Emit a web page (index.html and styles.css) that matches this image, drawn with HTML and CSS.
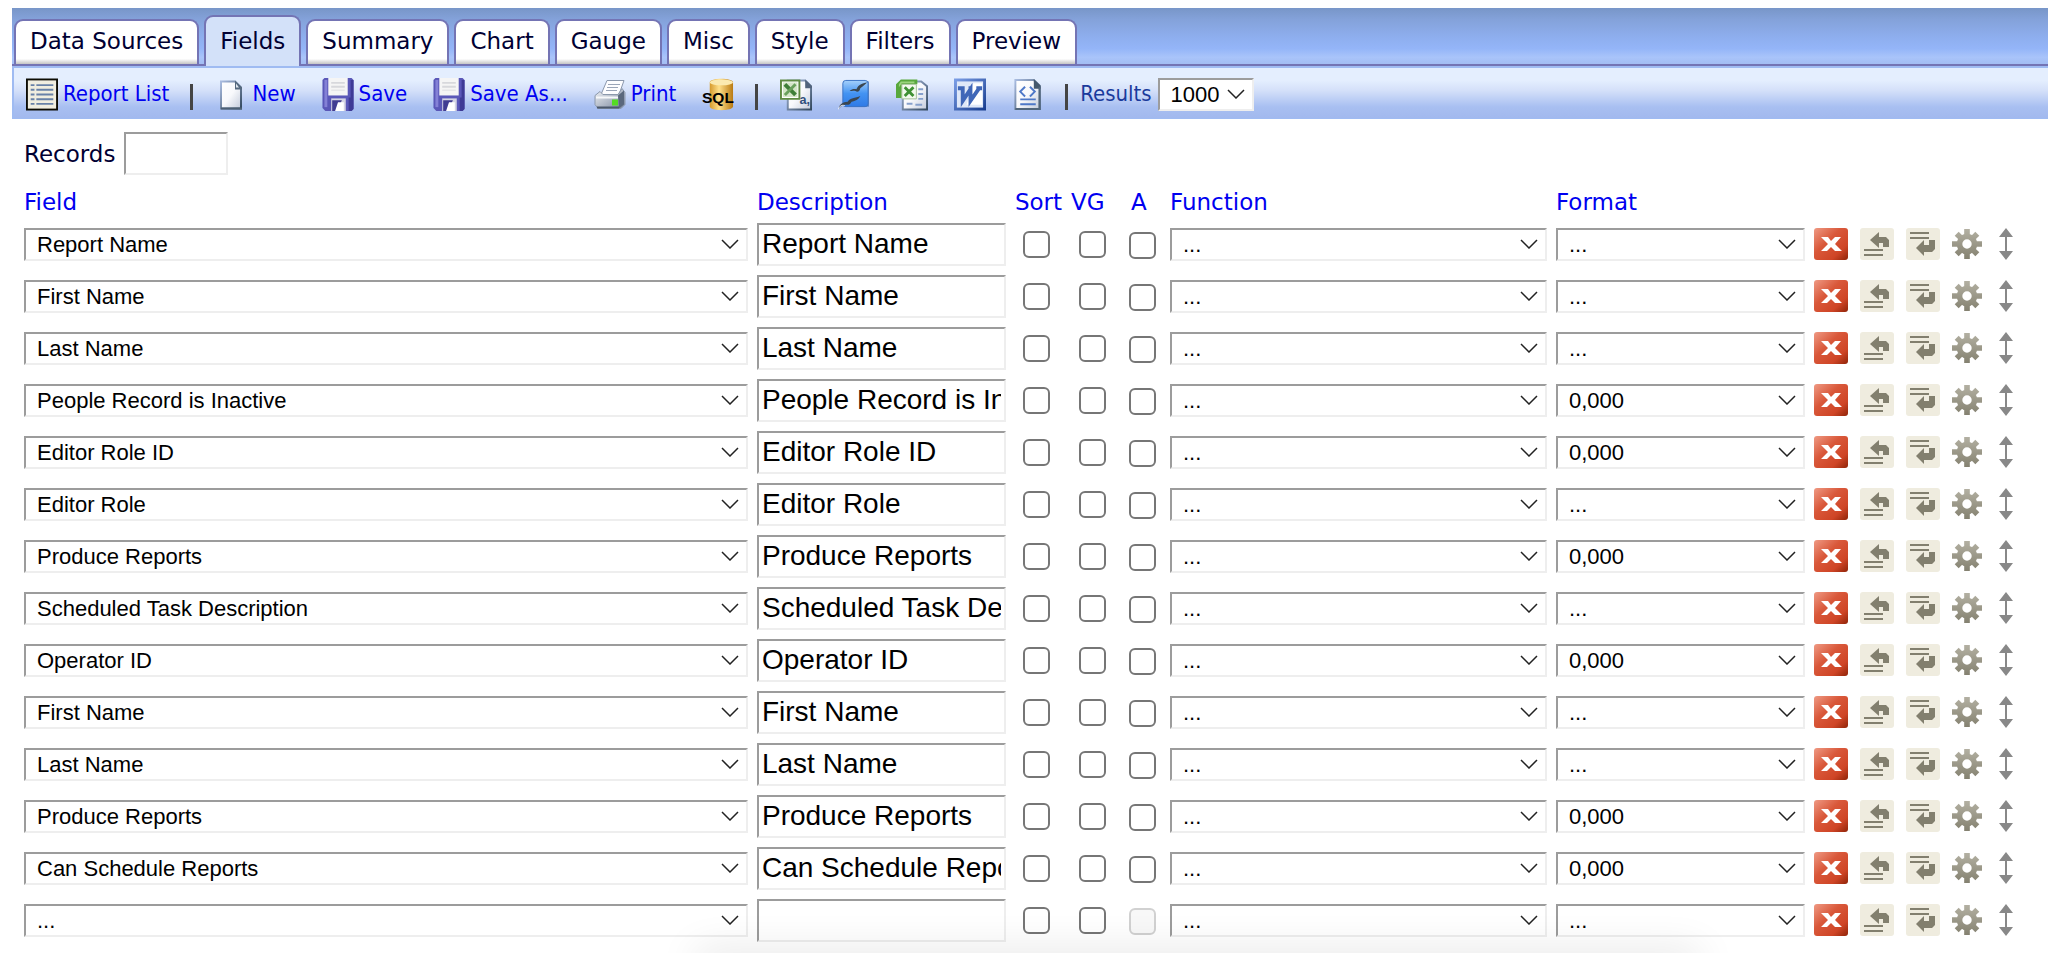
FILE: index.html
```html
<!DOCTYPE html>
<html lang="en">
<head>
  <meta charset="UTF-8">
  <meta name="viewport" content="width=device-width, initial-scale=1.0">
  <title>Report Designer - Fields</title>
  <link rel="stylesheet" href="styles.css">
</head>
<body>
  <!-- shared icons -->
  <svg class="sprite" width="0" height="0" aria-hidden="true">
    <defs>
      <linearGradient id="g-red" x1="0" y1="0" x2="1" y2="1">
        <stop offset="0" stop-color="#ef9a84"/><stop offset=".4" stop-color="#d9583a"/><stop offset=".75" stop-color="#cf4526"/><stop offset="1" stop-color="#8f2408"/>
      </linearGradient>
      <linearGradient id="g-gear" gradientUnits="userSpaceOnUse" x1="0" y1="0" x2="0" y2="32">
        <stop offset="0" stop-color="#b3b0a2"/><stop offset="1" stop-color="#848170"/>
      </linearGradient>
      <linearGradient id="g-page" x1="0" y1="0" x2="1" y2="1">
        <stop offset="0" stop-color="#ffffff"/><stop offset=".5" stop-color="#f8f9fc"/><stop offset="1" stop-color="#c3cbdb"/>
      </linearGradient>
      <linearGradient id="g-edge" x1="0" y1="0" x2="1" y2="1">
        <stop offset="0" stop-color="#a9bce0"/><stop offset="1" stop-color="#34495f"/>
      </linearGradient>
      <linearGradient id="g-gold" x1="0" y1="0" x2="1" y2="0">
        <stop offset="0" stop-color="#d69a2c"/><stop offset=".4" stop-color="#ffe08a"/><stop offset="1" stop-color="#b97a12"/>
      </linearGradient>
      <linearGradient id="g-blue" x1="0" y1="0" x2="0" y2="1">
        <stop offset="0" stop-color="#a5d0fb"/><stop offset=".5" stop-color="#4393f2"/><stop offset="1" stop-color="#2f7ae6"/>
      </linearGradient>
      <linearGradient id="g-metal" x1="0" y1="0" x2="1" y2="1">
        <stop offset="0" stop-color="#f4f6f9"/><stop offset="1" stop-color="#75839a"/>
      </linearGradient>
      <linearGradient id="g-word" x1="0" y1="0" x2="1" y2="1">
        <stop offset="0" stop-color="#7da0e8"/><stop offset="1" stop-color="#153a8c"/>
      </linearGradient>
    </defs>

    <symbol id="icon-save" viewBox="0 0 32 34">
      <path fill="#5a57b8" d="M2 0h28l2 2v30l-2 2H3l-3-3V2z"/>
      <path fill="#8481d6" d="M2 2h3v28H2z"/>
      <path fill="#3e3a96" d="M29 2h3v30l-2 2h-3V20h2z"/>
      <path fill="#f5f5f5" d="M6 0h20v18H6z"/>
      <path fill="#d7d8dc" d="M9 4h14v2H9zM9 8h14v2H9zM9 12h14v1H9z"/>
      <path fill="#d4d4e4" d="M9 21h15v13H9z"/>
      <path fill="#403c92" d="M10 23h10l-5 11h-5z"/>
      <path fill="#fff" d="M16 25h6v9h-9z"/>
    </symbol>

    <symbol id="icon-delete" viewBox="0 0 34 32">
      <rect width="34" height="32" rx="3" fill="url(#g-red)"/>
      <path fill="#fff" d="M7 9h7l3 4 4-4h6l-6 7 7 7h-7l-4-4-4 4H7l7-7z"/>
    </symbol>

    <symbol id="icon-insert-above" viewBox="0 0 34 32">
      <rect width="34" height="32" rx="3" fill="#efecdf"/>
      <path fill="#827f6e" d="M10 12l9-8v5h7l3 3v7h-6v-4h-4v5zM4 21h19v2H4zM4 26h19v2H4z"/>
    </symbol>

    <symbol id="icon-insert-below" viewBox="0 0 34 32">
      <rect width="34" height="32" rx="3" fill="#efecdf"/>
      <path fill="#827f6e" d="M10 20l8-8v5h5v-5h6v9l-3 3h-8v4zM4 4h19v2H4zM4 9h19v2H4z"/>
    </symbol>

    <symbol id="icon-gear" viewBox="0 0 32 32">
      <path stroke="url(#g-gear)" stroke-width="6" d="M16 0v8M16 24v8M0 16h8M24 16h8M5 5l5 5M22 22l5 5M27 5l-5 5M10 22l-5 5"/>
      <circle cx="16" cy="16" r="8" fill="#fff" stroke="url(#g-gear)" stroke-width="6"/>
    </symbol>

    <symbol id="icon-move" viewBox="0 0 16 32">
      <path fill="#888" d="M8 0l7 9H9v14h6l-7 9-7-9h6V9H1z"/>
    </symbol>
  </svg>

  <div class="designer">
    <nav class="tabs">
      <a class="tab" href="#data-sources">Data Sources</a>
      <a class="tab active" href="#fields">Fields</a>
      <a class="tab" href="#summary">Summary</a>
      <a class="tab" href="#chart">Chart</a>
      <a class="tab" href="#gauge">Gauge</a>
      <a class="tab" href="#misc">Misc</a>
      <a class="tab" href="#style">Style</a>
      <a class="tab" href="#filters">Filters</a>
      <a class="tab" href="#preview">Preview</a>
    </nav>

    <div class="toolbar">
      <a class="tool" href="#list">
        <svg class="icon" viewBox="0 0 34 34">
          <path fill="#0c0c04" d="M0 0h34v34H0z"/>
          <path fill="#f0eee0" d="M2 2h30v30H2z"/>
          <path stroke="#6882a8" stroke-width="2" d="M5 7h4M11 7h18M5 12h4M11 12h18M5 17h4M11 17h18M5 22h4M11 22h18M5 27h4M11 27h18"/>
        </svg>
        Report List
      </a>
      <span class="separator"></span>
      <a class="tool" href="#new">
        <svg class="icon" viewBox="0 0 32 32">
          <path fill="url(#g-page)" stroke="url(#g-edge)" stroke-width="2" d="M6 3h14l6 6v21H6z"/>
          <path fill="#55697e" d="M20 2l7 7v2h-7z"/>
          <path fill="#dfe7f0" d="M21 5l3 4h-3z"/>
          <path stroke="#4d6074" stroke-width="2" d="M6 30h21"/>
        </svg>
        New
      </a>
      <a class="tool" href="#save"><svg class="icon"><use href="#icon-save"/></svg>Save</a>
      <a class="tool" href="#save-as"><svg class="icon"><use href="#icon-save"/></svg>Save As...</a>
      <a class="tool" href="#print">
        <svg class="icon" viewBox="0 0 32 32">
          <path fill="#fdfdff" stroke="#8a97ac" d="M13 2h17l-5 14H7z"/>
          <path stroke="#9aa5b8" d="M14 6h12M13 9h11M12 12h11"/>
          <path fill="url(#g-metal)" stroke="#8c99ac" d="M6 13l3 3h15l4-6 3 4v12l-4 4H4l-3-4V17z"/>
          <path fill="#f7f8fa" d="M2 18h22v2H2z"/>
          <path fill="#5a687c" d="M24 17l6-5v14l-5 4z"/>
          <path fill="#4b586c" d="M3 28h22v2H3z"/>
          <path fill="#53dc22" d="M18 21h6v6h-6z"/>
        </svg>
        Print
      </a>
      <a class="tool" href="#sql">
        <svg class="icon" viewBox="0 0 33 33">
          <path fill="url(#g-gold)" d="M8 4c0-5 24-5 24 0v25c0 5-24 5-24 0z"/>
          <ellipse cx="20" cy="4" rx="12" ry="3" fill="#fbeab0"/>
          <text class="sql-text" x="0" y="25">SQL</text>
        </svg>
      </a>
      <span class="separator"></span>
      <a class="tool" href="#csv" aria-label="Export to CSV">
        <svg class="icon" viewBox="0 0 33 33">
          <path fill="url(#g-page)" stroke="url(#g-edge)" stroke-width="2" d="M8 2h18l6 6v24H8z"/>
          <path fill="#52647c" d="M26 1l7 7v2h-7z"/>
          <path fill="#fff" stroke="#5f8a42" stroke-width="2" d="M1 2h19v19H1z"/>
          <path fill="#d5e5c8" d="M3 4h15v15H3z"/>
          <path stroke="#3f7e38" stroke-width="4" d="M5 6l11 11"/>
          <path stroke="#6aa05c" stroke-width="3" d="M16 6L5 17"/>
          <text class="csv-text" x="20" y="26">a,</text>
        </svg>
      </a>
      <a class="tool" href="#odf" aria-label="Export to OpenOffice">
        <svg class="icon" viewBox="0 0 33 33">
          <path fill="#24579f" d="M7 3h25v26H7z" opacity=".6"/>
          <rect x="5" y="2" width="26" height="27" rx="3" fill="url(#g-blue)" stroke="#3a73c4"/>
          <path fill="#3b4650" d="M12 13c3-3 5-2 7-2 2-5 6-6 11-7-4 4-5 4-7 6-1 4-3 4-5 3-2-1-3 0-6 0zM1 31c0-4 4-7 9-7 2-4 8-4 13-6-2 4-5 5-9 6-2 4-4 3-6 3-3 0-4 1-7 4z"/>
          <path stroke="#eef2f7" fill="none" d="M0 32c2-4 4-5 7-4"/>
        </svg>
      </a>
      <a class="tool" href="#excel" aria-label="Export to Excel">
        <svg class="icon" viewBox="0 0 33 33">
          <path fill="url(#g-page)" stroke="url(#g-edge)" stroke-width="2" d="M7 3h19l6 5v24H7z"/>
          <path stroke="#86a0cc" stroke-width="2" d="M23 11h5M23 16h5M23 21h5M11 26h6M20 27h7"/>
          <path fill="#58a83c" d="M5 1h17v5H8v14H0V6z"/>
          <path fill="#9bd47e" d="M5 3h14v2H6L3 9V6z"/>
          <path fill="#f3faee" stroke="#a4bf98" d="M6 6h15v15H6z"/>
          <path stroke="#3f9034" stroke-width="3" d="M9 9l9 9M18 9l-9 9"/>
        </svg>
      </a>
      <a class="tool" href="#word" aria-label="Export to Word">
        <svg class="icon" viewBox="0 0 33 33">
          <path fill="url(#g-word)" d="M0 0h33v33H0z"/>
          <path fill="#dfe8f8" d="M3 3h27v27H3z"/>
          <path fill="#fff" d="M20 5h9v22H13z"/>
          <path fill="none" stroke="#4067b8" stroke-width="4" d="M4 10h7M15 10h4M23 10h6M9 10v13l8-12v12l9-13"/>
        </svg>
      </a>
      <a class="tool" href="#xml" aria-label="Export to XML">
        <svg class="icon" viewBox="0 0 32 34">
          <path fill="url(#g-page)" stroke="url(#g-edge)" stroke-width="2" d="M3 2h19l6 6v24H3z"/>
          <path fill="#44586c" d="M22 1l7 7v3h-7z"/>
          <path fill="none" stroke="#51667c" stroke-width="2" d="M28 9v23H3"/>
          <path fill="none" stroke="#4e78c8" stroke-width="2" d="M13 9l-5 5 5 5M18 9l5 5-5 5M8 22h16M8 27h16"/>
        </svg>
      </a>
      <span class="separator"></span>
      <div class="results">
        <label for="results">Results</label>
        <select class="select" id="results">
          <option>1000</option>
        </select>
      </div>
    </div>

    <main class="content">
      <div class="records">
        <label for="records">Records</label>
        <input class="input records-input" type="text" id="records">
      </div>

      <table class="fields">
        <colgroup>
          <col>
          <col class="col-description">
          <col class="col-check">
          <col class="col-check">
          <col class="col-a">
          <col class="col-function">
          <col class="col-format">
          <col class="col-action">
          <col class="col-action">
          <col class="col-action">
          <col class="col-action">
          <col class="col-move">
        </colgroup>
        <thead>
          <tr>
            <th><a href="#field">Field</a></th>
            <th><a href="#description">Description</a></th>
            <th><a href="#sort">Sort</a></th>
            <th><a href="#vg">VG</a></th>
            <th class="a-head"><a href="#a">A</a></th>
            <th><a href="#function">Function</a></th>
            <th><a href="#format">Format</a></th>
            <td colspan="5"></td>
          </tr>
        </thead>
        <tbody id="field-rows"></tbody>
      </table>
    </main>
  </div>

  <div class="bottom-shadow"></div>

  <script src="script.js"></script>
</body>
</html>
```

FILE: styles.css
```css
body {
  margin: 0;
  background-color: #fff;
  color: #000033;
  font-family: Verdana, 'DejaVu Sans', sans-serif;
  font-size: 23px;
  line-height: 28px;
}

a {
  color: #0000f0;
  text-decoration: none;
}

.sprite {
  position: absolute;
}

.designer {
  padding: 8px 0 0 12px;
}

/* tabs */
.tabs {
  display: flex;
  align-items: flex-end;
  gap: 5px;
  height: 58px;
  padding-left: 2px;
  box-sizing: border-box;
  background: linear-gradient(#7896c8, #84a2da 20%, #8eaeee 50%, #94b5f8 70%, #a9c4fa 85%, #a3bdf3 96%, #7474b4 96%);
}

.tab {
  padding: 6px 14px 9px;
  margin-bottom: 2px;
  border: 2px solid #7474b4;
  border-bottom: none;
  border-radius: 9px 9px 0 0;
  background: linear-gradient(#fff 88%, #c4c4c4);
  color: #000033;
}

.tab.active {
  padding: 10px 14px 11px;
  margin-bottom: 0;
  background: #d3e1f9;
}

/* toolbar */
.toolbar {
  display: flex;
  align-items: center;
  gap: 26px;
  height: 53px;
  padding: 2px 0 0 12px;
  box-sizing: border-box;
  border: 2px solid #9fbbf2;
  border-right: none;
  border-bottom-width: 1px;
  background: linear-gradient(#e4eefe 25%, #d4e0f9 45%, #a8bff1 78%, #a2b9ee);
  font-family: Tahoma, 'DejaVu Sans Condensed', 'DejaVu Sans', sans-serif;
  font-size: 22px;
}

.tool {
  display: flex;
  align-items: center;
  gap: 5px;
}

.icon {
  width: 32px;
  height: 33px;
}

.separator {
  width: 3px;
  height: 26px;
  margin: 6px -4px 0 -5px;
  background-color: #444;
}

.results {
  display: flex;
  align-items: center;
  gap: 6px;
  margin-left: -10px;
  color: #1a3a9c;
}

.sql-text {
  font: bold 16px 'Liberation Sans', sans-serif;
}

.csv-text {
  font: bold 13px 'Liberation Sans', sans-serif;
  fill: #33507c;
}

/* form controls */
.select,
.input {
  box-sizing: border-box;
  margin: 0;
  border: 2px solid;
  border-color: #9c9c9c #eee #eee #9c9c9c;
  border-radius: 0;
  background-color: #fff;
  color: #000;
  font-family: Arial, 'Liberation Sans', sans-serif;
}

.select {
  display: block;
  width: 100%;
  height: 33px;
  padding: 0 32px 0 11px;
  appearance: none;
  background-image: url("data:image/svg+xml,%3Csvg xmlns='http://www.w3.org/2000/svg' width='18' height='10'%3E%3Cpath d='M1 1l8 8 8-8' fill='none' stroke='%23222' stroke-width='1.500'/%3E%3C/svg%3E");
  background-repeat: no-repeat;
  background-position: right 7px center;
  font-size: 22px;
}

.input {
  display: block;
  width: 100%;
  height: 43px;
  padding: 0 3px;
  font-size: 28px;
}

.check {
  display: block;
  width: 27px;
  height: 27px;
  margin: 0 0 0 8px;
  box-sizing: border-box;
  appearance: none;
  border: 2px solid #767676;
  border-radius: 6px;
  background-color: #fff;
}

.check-a {
  margin: 2px 0 0 2px;
}

.check:disabled {
  border-color: #d1d1d1;
  background-color: #f8f8f8;
}

/* content */
.content {
  padding: 13px 34px 0 12px;
}

.records {
  display: flex;
  align-items: center;
  gap: 9px;
}

.records-input {
  width: 104px;
}

.fields {
  width: 100%;
  table-layout: fixed;
  border-collapse: collapse;
}

.fields th {
  height: 43px;
  padding: 0 0 2px;
  box-sizing: border-box;
  vertical-align: bottom;
  text-align: left;
  font-weight: normal;
  white-space: nowrap;
}

.fields tbody td {
  height: 52px;
  padding: 0 9px 0 0;
}

.fields .check-cell,
.fields .action-cell {
  padding: 0;
}

.fields .a-head {
  padding-left: 4px;
}

.col-description {
  width: 258px;
}

.col-check {
  width: 56px;
}

.col-a {
  width: 43px;
}

.col-function {
  width: 386px;
}

.col-format {
  width: 258px;
}

.col-action {
  width: 46px;
}

.col-move {
  width: 16px;
}

.action {
  display: block;
  padding: 0;
  border: none;
  background: none;
  cursor: pointer;
}

.action svg {
  display: block;
  width: 34px;
  height: 32px;
}

.action .gear {
  width: 30px;
}

.action .move {
  width: 16px;
}

/* soft edge of the panel below the window */
.bottom-shadow {
  position: fixed;
  right: 17%;
  bottom: -20px;
  left: 34%;
  height: 20px;
  box-shadow: 0 0 40px rgba(0, 0, 0, 0.14);
  pointer-events: none;
}
```

FILE: script.js
```javascript
const rows = [
  { field: 'Report Name', format: '...' },
  { field: 'First Name', format: '...' },
  { field: 'Last Name', format: '...' },
  { field: 'People Record is Inactive', format: '0,000' },
  { field: 'Editor Role ID', format: '0,000' },
  { field: 'Editor Role', format: '...' },
  { field: 'Produce Reports', format: '0,000' },
  { field: 'Scheduled Task Description', format: '...' },
  { field: 'Operator ID', format: '0,000' },
  { field: 'First Name', format: '...' },
  { field: 'Last Name', format: '...' },
  { field: 'Produce Reports', format: '0,000' },
  { field: 'Can Schedule Reports', format: '0,000' },
  { field: '', format: '...' }
];

const actions = [
  { icon: 'delete', label: 'Delete row' },
  { icon: 'insert-above', label: 'Insert row above' },
  { icon: 'insert-below', label: 'Insert row below' },
  { icon: 'gear', label: 'Advanced settings' },
  { icon: 'move', label: 'Move row' }
];

function selectCell(value, label) {
  return `<td><select class="select" aria-label="${label}"><option>${value}</option></select></td>`;
}

function checkCell(label, className = 'check', disabled = false) {
  return `<td class="check-cell"><input type="checkbox" class="${className}" aria-label="${label}" ${disabled ? 'disabled' : ''}></td>`;
}

function renderRows() {
  document.getElementById('field-rows').innerHTML = rows.map((row) => `
    <tr>
      ${selectCell(row.field || '...', 'Field')}
      <td><input class="input" type="text" aria-label="Description" value="${row.field}"></td>
      ${checkCell('Sort')}
      ${checkCell('VG')}
      ${checkCell('A', 'check check-a', !row.field)}
      ${selectCell('...', 'Function')}
      ${selectCell(row.format, 'Format')}
      ${actions.map((action) => `
        <td class="action-cell">
          <button class="action" type="button" aria-label="${action.label}">
            <svg class="${action.icon}"><use href="#icon-${action.icon}"/></svg>
          </button>
        </td>`).join('')}
    </tr>`).join('');
}

renderRows();
```
